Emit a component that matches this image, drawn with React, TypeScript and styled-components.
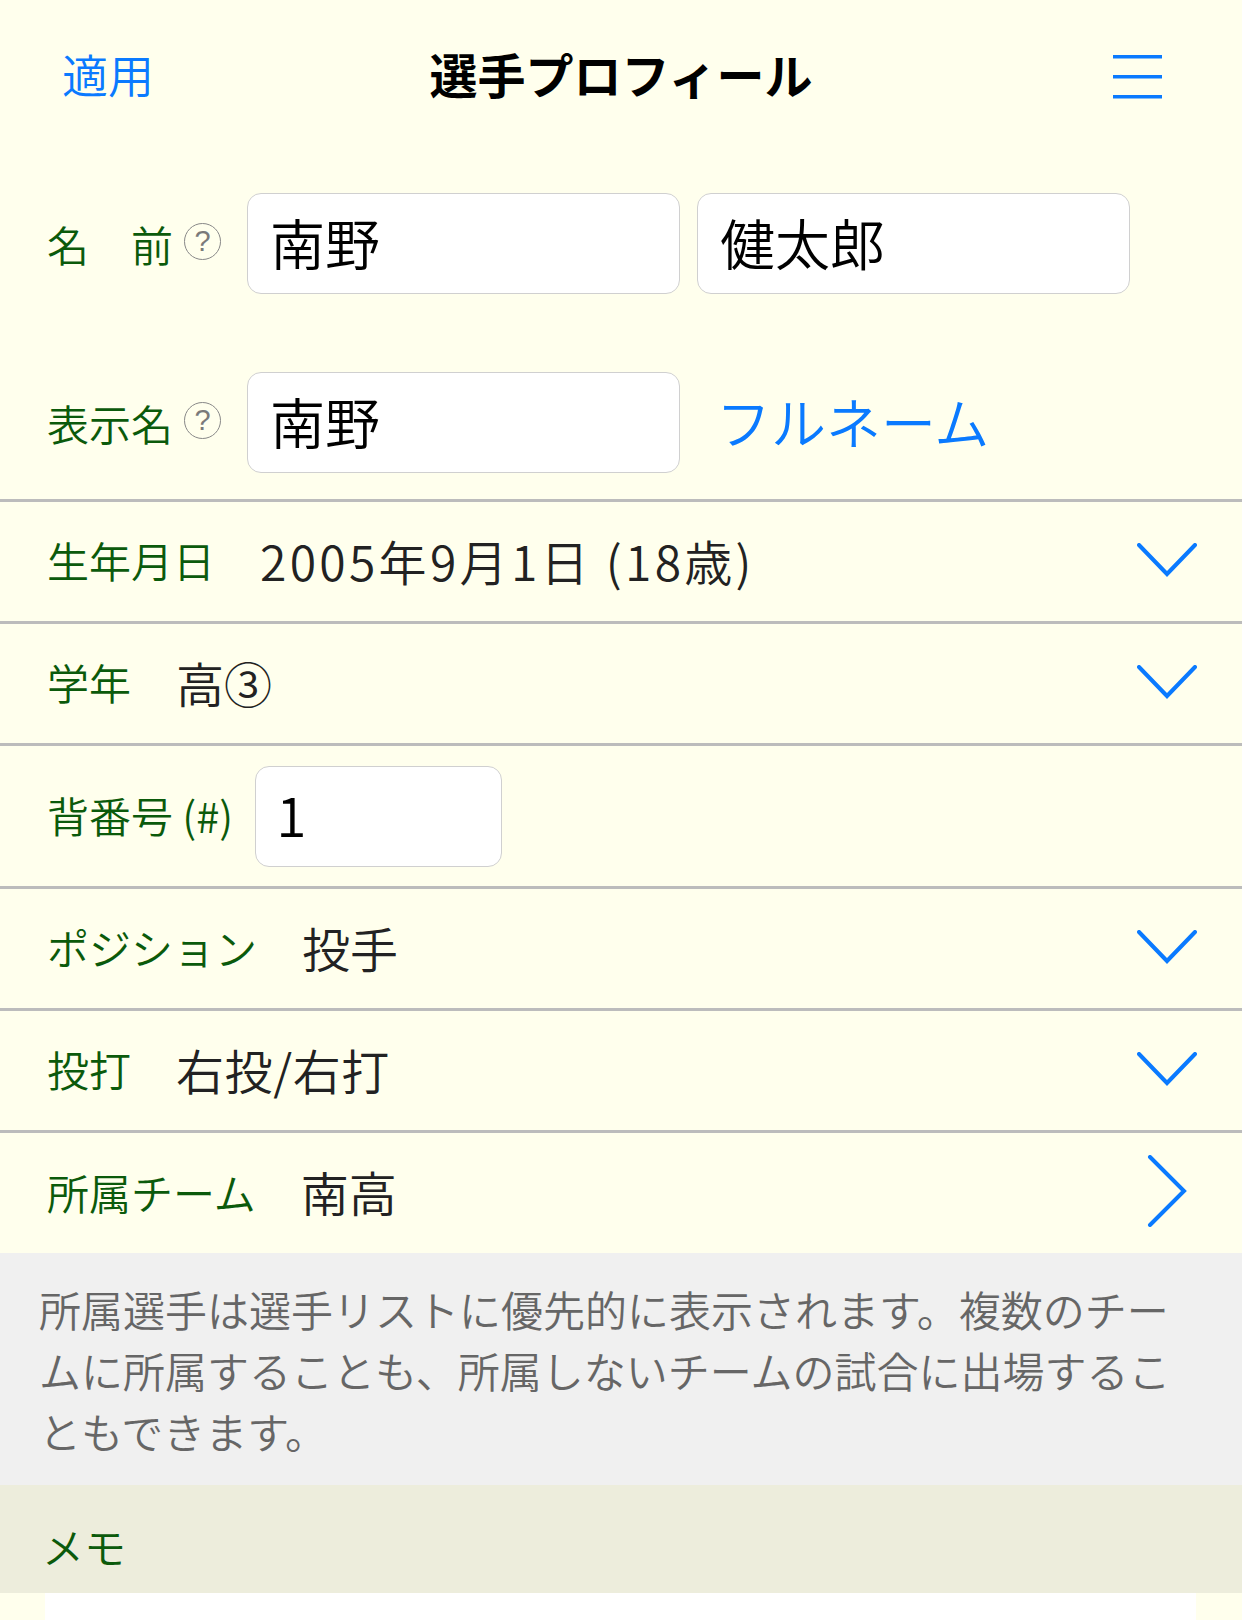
import React from "react";
import styled, { createGlobalStyle } from "styled-components";

const Global = createGlobalStyle`
  html, body {
    margin: 0;
    padding: 0;
    background: #ffffed;
  }
  body {
    font-family: "Noto Sans CJK JP", "Noto Sans", sans-serif;
    font-weight: 350;
  }
`;

const BLUE = "#0a7aff";
const GREEN = "#0b5a0b";
const DIVIDER = "#bcbcbc";

const Page = styled.div`
  width: 1242px;
  height: 1620px;
  overflow: hidden;
  background: #ffffed;
  display: flex;
  flex-direction: column;
`;

const Header = styled.header`
  height: 154px;
  box-sizing: border-box;
  padding: 0 62px 8px;
  display: grid;
  grid-template-columns: 1fr auto 1fr;
  align-items: center;
`;

const HeaderLink = styled.span`
  font-size: 46px;
  color: ${BLUE};
  justify-self: start;
`;

const Title = styled.h1`
  margin: 0;
  font-size: 48px;
  font-weight: 700;
  color: #000;
`;

const MenuButton = styled.button`
  justify-self: end;
  border: 0;
  background: transparent;
  padding: 8px 18px 0 0;
  display: flex;
  align-items: center;
`;

const NameSection = styled.section`
  padding: 39px 0 26px;
  display: flex;
  flex-direction: column;
  gap: 78px;
  border-bottom: 3px solid ${DIVIDER};
`;

const NameRow = styled.div`
  height: 101px;
  display: flex;
  align-items: center;
  padding-left: 47px;
`;

const FieldLabel = styled.span`
  font-size: 42px;
  color: ${GREEN};
  white-space: nowrap;
`;

const Help = styled.span`
  box-sizing: border-box;
  width: 37px;
  height: 37px;
  margin: 0 26px 4px 11px;
  border: 1.5px solid #888;
  border-radius: 50%;
  color: #7a7a7a;
  font-family: "Liberation Sans", sans-serif;
  font-weight: 400;
  font-size: 29px;
  line-height: 1;
  display: flex;
  align-items: center;
  justify-content: center;
`;

const TextInput = styled.input<{ $w: number }>`
  box-sizing: border-box;
  width: ${(p) => p.$w}px;
  height: 101px;
  margin: 0;
  padding: 0 0 6px 22px;
  border: 1px solid #d0d0d0;
  border-radius: 14px;
  background: #fff;
  font-family: "Noto Sans CJK JP", sans-serif;
  font-weight: 350;
  font-size: 55px;
  color: #000;
  outline: none;
`;

const InputGap = styled.span`
  width: 17px;
`;

const Link = styled.span`
  margin: 0 0 6px 36px;
  font-size: 55px;
  color: ${BLUE};
`;

const ListRow = styled.div<{ $h: number; $last?: boolean }>`
  box-sizing: border-box;
  height: ${(p) => p.$h}px;
  display: flex;
  align-items: center;
  padding: 0 45px 4px 47px;
  border-bottom: ${(p) => (p.$last ? "none" : `3px solid ${DIVIDER}`)};
`;

const Value = styled.span<{ $spacing?: number }>`
  margin-left: 45px;
  font-size: 48px;
  color: #222;
  white-space: nowrap;
  letter-spacing: ${(p) => p.$spacing ?? 0}px;
`;

const NumberInput = styled(TextInput)`
  margin: 4px 0 0 22px;
  padding-left: 20px;
`;

const ChevronBox = styled.span`
  margin-left: auto;
  width: 60px;
  display: flex;
  justify-content: center;
`;

const Note = styled.p`
  margin: 0;
  background: #f0f0f0;
  padding: 25px 40px 24px 39px;
  font-size: 42px;
  line-height: 61px;
  color: #666;
`;

const MemoHeader = styled.div`
  box-sizing: border-box;
  height: 108px;
  background: #ededdc;
  display: flex;
  align-items: center;
  padding: 12px 0 0 42px;
`;

const MemoBox = styled.textarea`
  flex: 1;
  margin: 0 46px 0 45px;
  border: 0;
  background: #fff;
  resize: none;
  outline: none;
`;

const Hamburger = () => (
  <svg width="49" height="44" viewBox="0 0 49 44">
    <rect x="0" y="0" width="49" height="3.5" fill={BLUE} />
    <rect x="0" y="20" width="49" height="3.5" fill={BLUE} />
    <rect x="0" y="40" width="49" height="3.5" fill={BLUE} />
  </svg>
);

const ChevronDown = () => (
  <svg width="60" height="34" viewBox="0 0 60 34">
    <polyline
      points="2,2 30,31 58,2"
      fill="none"
      stroke={BLUE}
      strokeWidth="4"
      strokeLinecap="round"
      strokeLinejoin="miter"
    />
  </svg>
);

const ChevronRight = () => (
  <svg width="40" height="72" viewBox="0 0 40 72">
    <polyline
      points="3,2 37,36 3,70"
      fill="none"
      stroke={BLUE}
      strokeWidth="4"
      strokeLinecap="round"
      strokeLinejoin="miter"
    />
  </svg>
);

type Row = {
  label: string;
  value: string;
  chevron: "down" | "right";
  spacing?: number;
  height: number;
};

const rows: Row[] = [
  { label: "生年月日", value: "2005年9月1日 (18歳)", chevron: "down", spacing: 3.3, height: 122 },
  { label: "学年", value: "高③", chevron: "down", height: 122 },
];

const rows2: Row[] = [
  { label: "ポジション", value: "投手", chevron: "down", height: 122 },
  { label: "投打", value: "右投/右打", chevron: "down", spacing: 0.6, height: 122 },
  { label: "所属チーム", value: "南高", chevron: "right", height: 120 },
];

const SelectRow = ({ row, last }: { row: Row; last?: boolean }) => (
  <ListRow $h={row.height} $last={last}>
    <FieldLabel>{row.label}</FieldLabel>
    <Value $spacing={row.spacing}>{row.value}</Value>
    <ChevronBox>{row.chevron === "down" ? <ChevronDown /> : <ChevronRight />}</ChevronBox>
  </ListRow>
);

export default function App() {
  return (
    <>
      <Global />
      <Page>
        <Header>
          <HeaderLink>適用</HeaderLink>
          <Title>選手プロフィール</Title>
          <MenuButton aria-label="menu">
            <Hamburger />
          </MenuButton>
        </Header>

        <NameSection>
          <NameRow>
            <FieldLabel>名　前</FieldLabel>
            <Help>?</Help>
            <TextInput $w={433} value="南野" readOnly />
            <InputGap />
            <TextInput $w={433} value="健太郎" readOnly />
          </NameRow>
          <NameRow>
            <FieldLabel>表示名</FieldLabel>
            <Help>?</Help>
            <TextInput $w={433} value="南野" readOnly />
            <Link>フルネーム</Link>
          </NameRow>
        </NameSection>

        {rows.map((r) => (
          <SelectRow key={r.label} row={r} />
        ))}

        <ListRow $h={143}>
          <FieldLabel>背番号 (#)</FieldLabel>
          <NumberInput $w={247} value="1" readOnly />
        </ListRow>

        {rows2.map((r, i) => (
          <SelectRow key={r.label} row={r} last={i === rows2.length - 1} />
        ))}

        <Note>
          所属選手は選手リストに優先的に表示されます。複数のチームに所属することも、所属しないチームの試合に出場することもできます。
        </Note>

        <MemoHeader>
          <FieldLabel>メモ</FieldLabel>
        </MemoHeader>
        <MemoBox readOnly />
      </Page>
    </>
  );
}
